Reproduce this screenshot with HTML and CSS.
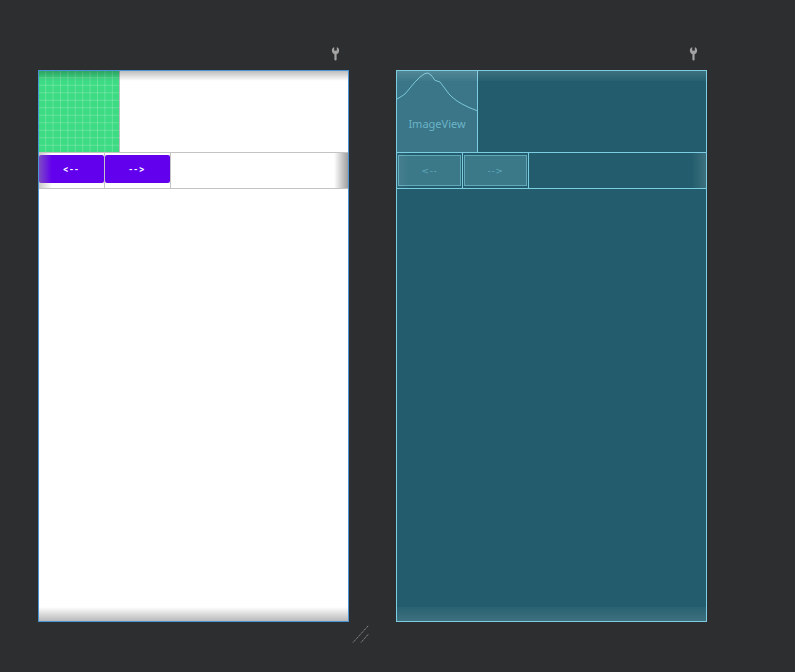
FILE: index.html
```html
<!DOCTYPE html>
<html>
<head>
<meta charset="utf-8">
<link rel="stylesheet" href="styles.css">
</head>
<body>
<div class="canvas">
  <div class="device">
    <div class="toolbar">
      <svg class="wrench" width="9" height="14" viewBox="0 0 9 14"><circle cx="4.5" cy="3.6" r="3.6" fill="#a3a3a3"/><rect x="3.4" y="5" width="2.2" height="8.6" rx="1.1" fill="#a3a3a3"/><rect x="3.2" y="0" width="2.6" height="3.6" fill="#2d2e30"/></svg>
    </div>
    <div class="screen design">
      <div class="top">
        <div class="image">
          <svg width="81" height="81" viewBox="0 0 108 108" preserveAspectRatio="none">
            <rect width="108" height="108" fill="#3ddc84"/>
            <g stroke="#ffffff" stroke-opacity="0.35" stroke-width="0.8">
              <path d="M9 0V108M19 0V108M29 0V108M39 0V108M49 0V108M59 0V108M69 0V108M79 0V108M89 0V108M99 0V108"/>
              <path d="M0 9H108M0 19H108M0 29H108M0 39H108M0 49H108M0 59H108M0 69H108M0 79H108M0 89H108M0 99H108"/>
            </g>
          </svg>
        </div>
      </div>
      <div class="row">
        <div class="cell"><div class="btn">&lt;--</div></div>
        <div class="cell"><div class="btn">--&gt;</div></div>
        <div class="fade-left"></div>
        <div class="fade-right"></div>
      </div>
      <div class="edge-top"></div>
      <div class="edge-bottom"></div>
    </div>
    <svg class="resize" width="18" height="20" viewBox="0 0 18 20"><path d="M1 18.5 L16.5 1.5 M9 18.5 L16.5 10" stroke="#8c8c8c" stroke-width="1" stroke-dasharray="1.5 0.6" fill="none"/></svg>
  </div>
  <div class="device">
    <div class="toolbar">
      <svg class="wrench" width="9" height="14" viewBox="0 0 9 14"><circle cx="4.5" cy="3.6" r="3.6" fill="#a3a3a3"/><rect x="3.4" y="5" width="2.2" height="8.6" rx="1.1" fill="#a3a3a3"/><rect x="3.2" y="0" width="2.6" height="3.6" fill="#2d2e30"/></svg>
    </div>
    <div class="screen blueprint">
      <div class="top">
        <div class="image">
          <svg class="curve" width="81" height="42" viewBox="0 0 81 42"><path d="M0 28 L1 27.5 L5 25 L8 23 L13 17 L18 11 L23 6 L28 2.5 L31 2 L34 4 L36 6.5 L38 9.5 L40 10 L43 11 L46 15 L49 19 L52 23 L55 26 L60 30 L65 33 L72 36.5 L81 40" stroke="#7cc6da" stroke-width="1" fill="none"/></svg>
          <div class="label">ImageView</div>
        </div>
      </div>
      <div class="row">
        <div class="cell"><div class="btn">&lt;--</div></div>
        <div class="cell"><div class="btn">--&gt;</div></div>
        <div class="fade-left"></div>
        <div class="fade-right"></div>
      </div>
      <div class="edge-top"></div>
      <div class="edge-bottom"></div>
    </div>
  </div>
</div>
</body>
</html>
```
FILE: styles.css
```css
html, body {
  margin: 0;
  padding: 0;
}
body {
  background: #2d2e30;
  width: 795px;
  height: 672px;
  overflow: hidden;
  font-family: Roboto, "Noto Sans", sans-serif;
}
.canvas {
  display: flex;
  gap: 47px;
  padding-left: 38px;
}
.device {
  position: relative;
  width: 311px;
  display: flex;
  flex-direction: column;
}
.toolbar {
  height: 70px;
  box-sizing: border-box;
  padding: 47px 9px 0 0;
  display: flex;
  justify-content: flex-end;
  align-items: flex-start;
}
.wrench {
  display: block;
}
.screen {
  position: relative;
  width: 311px;
  height: 552px;
  box-sizing: border-box;
  overflow: hidden;
}
.top {
  display: flex;
  height: 81px;
}
.image {
  width: 81px;
  height: 81px;
  flex: none;
}
.image svg {
  display: block;
}
.row {
  position: relative;
  display: flex;
  height: 35px;
}
.cell {
  width: 65px;
  flex: none;
  display: flex;
  flex-direction: column;
}
.btn {
  display: flex;
  align-items: center;
  justify-content: center;
  font-size: 10px;
  font-weight: 500;
  letter-spacing: 1.6px;
  font-variant-ligatures: none;
  font-feature-settings: "liga" 0, "calt" 0;
}
.fade-left, .fade-right {
  position: absolute;
  top: 0;
  bottom: 0;
  width: 13px;
}
.fade-left { left: 0; }
.fade-right { right: 0; width: 14px; }
.edge-top, .edge-bottom {
  position: absolute;
  left: 0;
  right: 0;
}
.edge-top { top: 0; height: 10px; }
.edge-bottom { bottom: 0; height: 14px; }

/* design view */
.design {
  background: #ffffff;
  border: 1px solid #4a94d4;
}
.design .image {
  width: 80px;
  border-right: 1px solid #bfbfbf;
}
.design .image svg {
  width: 80px;
}
.design .row {
  border-top: 1px solid #c4c4c4;
  border-bottom: 1px solid #c4c4c4;
}
.design .cell {
  border-right: 1px solid #c4c4c4;
}
.design .btn {
  margin-top: 2px;
  height: 28px;
  background: #6200ee;
  border-radius: 2px;
  color: #ffffff;
}
.design .fade-left {
  background: linear-gradient(to right, rgba(150, 150, 150, 0.5), rgba(150, 150, 150, 0));
}
.design .fade-right {
  background: linear-gradient(to right, rgba(0, 0, 0, 0), rgba(0, 0, 0, 0.38));
}
.design .edge-top {
  background: linear-gradient(rgba(0, 0, 0, 0.26), rgba(0, 0, 0, 0));
}
.design .edge-bottom {
  background: linear-gradient(rgba(0, 0, 0, 0), rgba(0, 0, 0, 0.28));
}
.resize {
  position: absolute;
  left: 314px;
  top: 624px;
}

/* blueprint view */
.blueprint {
  background: #235d6d;
  border: 1px solid #7ccde2;
}
.blueprint .image {
  width: 80px;
  background: #3a7687;
  border-right: 1px solid #7ccde2;
  display: flex;
  flex-direction: column;
  align-items: center;
}
.blueprint .label {
  margin-top: 4px;
  font-family: "Noto Sans", sans-serif;
  font-size: 11px;
  line-height: 14px;
  color: #6cb4c7;
}
.blueprint .row {
  border-top: 1px solid #7ccde2;
  border-bottom: 1px solid #7ccde2;
}
.blueprint .cell {
  border-right: 1px solid #7ccde2;
}
.blueprint .btn {
  margin: 2px 0 0 1px;
  width: 61px;
  height: 29px;
  background: #3b7888;
  border: 1px solid #62a8ba;
  color: #5fa8bb;
  font-family: "DejaVu Sans", sans-serif;
  font-size: 9px;
  font-weight: 400;
  letter-spacing: 0.6px;
}
.blueprint .fade-left {
  background: linear-gradient(to right, rgba(255, 255, 255, 0.06), rgba(255, 255, 255, 0));
}
.blueprint .fade-right {
  background: linear-gradient(to right, rgba(255, 255, 255, 0), rgba(255, 255, 255, 0.12));
}
.blueprint .edge-top {
  background: linear-gradient(rgba(255, 255, 255, 0.12), rgba(255, 255, 255, 0.02));
}
.blueprint .edge-bottom {
  background: linear-gradient(rgba(255, 255, 255, 0.03), rgba(255, 255, 255, 0.12));
}
```
